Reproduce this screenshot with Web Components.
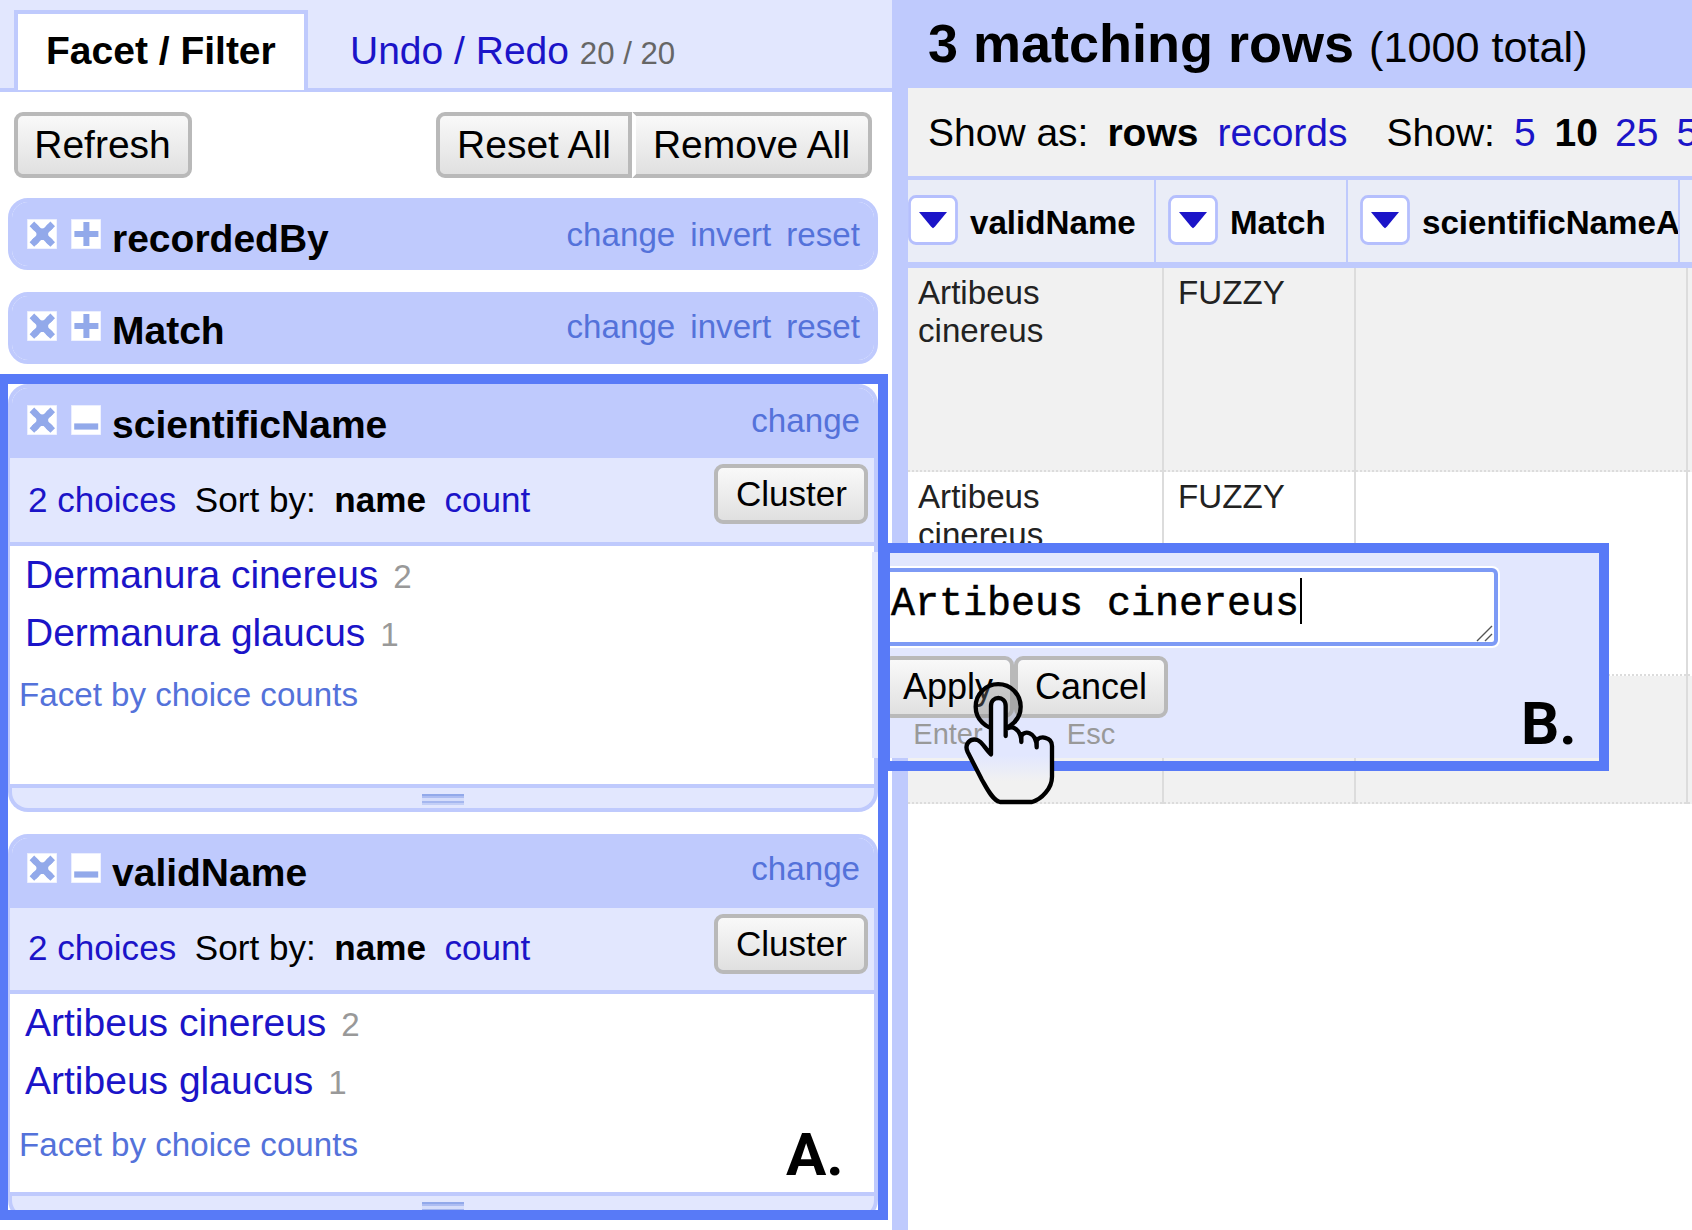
<!DOCTYPE html>
<html lang="en">
<head>
<meta charset="utf-8">
<title>Facets</title>
<style>
html, body { margin: 0; height: 100%; overflow: hidden; background: #fff; }
body {
  --frame: #bfcafd; --tint: #e2e7fe; --link: #1b14c8; --soft: #5472da; --mark: #587af7;
  font-family: "Liberation Sans", Arial, sans-serif; font-size: 39px; color: #000;
}
</style>
</head>
<body>
<refine-app></refine-app>
<script>
const define = (name, html, setup) => customElements.define(name, class extends HTMLElement {
  constructor() {
    super();
    this.attachShadow({ mode: 'open' }).innerHTML = html;
  }
  connectedCallback() { if (setup) setup(this, this.shadowRoot); }
});

define('push-button', `
<style>
:host { display: inline-flex; box-sizing: border-box; align-items: center; justify-content: center; flex: none;
  border: 4px solid #b9b9b9; border-radius: 9px; white-space: nowrap; color: #000;
  background: linear-gradient(#f9f9f9, #e0e0e0) padding-box; }
:host([join="start"]) { border-radius: 9px 0 0 9px; }
:host([join="end"]) { border-radius: 0 9px 9px 0; border-left-color: #fff; }
</style><slot></slot>`);

define('square-icon', `
<style>
:host { display: block; width: 30px; height: 30px; flex: none; }
svg { display: block; }
g { display: none; fill: #92a9ea; }
:host([kind="close"]) .close, :host([kind="plus"]) .plus, :host([kind="minus"]) .minus { display: block; }
</style>
<svg width="30" height="30" viewBox="0 0 30 30">
  <rect width="30" height="30" fill="#fff" opacity=".6"/><rect x=".8" y=".8" width="28.600" height="28.600" fill="#fff"/>
  <g class="close"><path d="M7 7 23.600 23.400M23.600 7 7 23.400" stroke="#92a9ea" stroke-width="6.400"/><path d="M9.400 9.400H21.200V21H9.400Z"/><path d="M7.200 2.600 11.800 7.200 7.200 11.800 2.600 7.200ZM23.400 2.600 28 7.200 23.400 11.800 18.800 7.200ZM7.200 27.800 11.800 23.200 7.200 18.600 2.600 23.200ZM23.400 27.800 28 23.200 23.400 18.600 18.800 23.200Z"/></g>
  <g class="plus"><path d="M12.400 3h6v9h9v6h-9v9h-6v-9h-9v-6h9z"/></g>
  <g class="minus"><path d="M3.200 18.400h24v6.200h-24z"/></g>
</svg>`);

define('tab-bar', `
<style>
:host { display: flex; box-sizing: border-box; height: 92px; padding: 10px 0 0 14px; line-height: 74px;
  background: linear-gradient(var(--tint) 88px, var(--frame) 88px); white-space: nowrap; }
.on { box-sizing: border-box; width: 294px; height: 80px; border: 4px solid var(--frame); border-bottom: 0;
  padding-left: 28px; font-weight: bold; background: #fff; }
.off { padding: 4px 0 0 42px; color: var(--link); }
small { font-size: 31.2px; color: #666; }
</style>
<div class="on">Facet / Filter</div>
<div class="off">Undo / Redo <small>20 / 20</small></div>`);

define('facet-box', `
<style>
:host { display: flex; flex-direction: column; width: 870px; box-sizing: border-box; flex: none; }
header { display: flex; box-sizing: border-box; height: 72px; border: 4px solid var(--frame); border-radius: 20px; }
.bar { display: flex; flex: 1; border-radius: 16px; background: var(--frame); padding: calc(var(--dy, 0px) + 13px) 14px 0 15px; }
.open { display: none; }
:host([open]) header { height: 74px; border-radius: 20px 20px 0 0; }
:host([open]) .bar { border-radius: 16px 16px 0 0; }
:host([open]) .open { display: flex; }
square-icon { margin-top: 4px; }
.bar square-icon + square-icon { margin-left: 14px; }
h3 { margin: 0 0 0 11px; flex: 1; font-size: 39px; line-height: 48px; }
nav { display: flex; gap: 15px; font-size: 33.15px; line-height: 40px; color: var(--soft); }
.tools { box-sizing: border-box; height: var(--tools, 84px); padding: 0 6px 0 18px; margin-left: 2px; border-right: 4px solid var(--frame);
  background: var(--tint); font-size: 35.1px; gap: 18.6px; line-height: var(--toolline, 84px); box-shadow: -2px 0 var(--frame); }
.tools a { color: var(--link); }
.tools push-button { box-sizing: border-box; width: 154px; height: 60px; padding-left: 1px; margin: 6px 0 0 auto; line-height: 50px; }
.list { flex-direction: column; box-sizing: border-box; height: var(--list, 246px); border: solid var(--frame); border-width: 4px 4px 4px 2px; background: #fff; }
.list ::slotted(choice-row) { flex: none; }
.counts { font-size: 33.15px; line-height: 40px; margin: var(--gap, 13px) 0 0 9px; color: var(--soft); }
.grip { box-sizing: border-box; height: 24px; flex: none; border: solid var(--frame); border-width: 0 4px 4px; border-radius: 0 0 20px 20px;
  background: var(--tint); justify-content: center; padding-top: 6px; }
.grip i { width: 42px; height: 11px; background: linear-gradient(#92a9ea 0 2px, #adbdf2 2px 4px, #d5ddfb 4px 7px, #a5b7ef 7px 9.5px, #c3cff7 9.5px 11px); }
</style>
<header><div class="bar"><square-icon kind="close"></square-icon><square-icon class="fold"></square-icon><h3></h3><nav></nav></div></header>
<div class="tools open"><a>2 choices</a><span>Sort by:</span><b>name</b><a>count</a><push-button>Cluster</push-button></div>
<div class="list open"><slot></slot><div class="counts">Facet by choice counts</div></div>
<div class="grip open"><i></i></div>`, (el, root) => {
  root.querySelector('h3').textContent = el.getAttribute('name');
  root.querySelector('.fold').setAttribute('kind', el.hasAttribute('open') ? 'minus' : 'plus');
  root.querySelector('nav').innerHTML = el.getAttribute('actions').split(' ').map(t => `<span>${t}</span>`).join('');
});

define('choice-row', `
<style>
:host { display: flex; align-items: baseline; gap: 15px; padding-left: 15px; height: 58px; line-height: 58px; color: var(--link); }
span { font-size: 33.15px; color: #999; }
</style><slot></slot><span></span>`, (el, root) => {
  root.querySelector('span').textContent = el.getAttribute('count');
});

define('facet-panel', `
<style>
:host { display: flex; flex-direction: column; width: 892px; height: 1230px; flex: none; background: #fff; }
.actions { display: flex; padding: 20px 20px 0 14px; flex: none; }
push-button { height: 66px; padding-right: 1px; }
.space { flex: 1; }
.facets { display: flex; flex-direction: column; gap: 22px; margin: 20px 0 0 8px; height: 1012px; overflow: hidden; }
facet-box:nth-child(even) { --dy: -2px; }
facet-box:nth-child(3) { margin-top: -2px; }
facet-box:nth-child(4) { --tools: 82px; --toolline: 80px; --list: 206px; --gap: 15px; }
</style>
<tab-bar></tab-bar>
<div class="actions">
  <push-button style="width:178px">Refresh</push-button><div class="space"></div>
  <push-button join="start" style="width:196px;padding:0">Reset All</push-button><push-button join="end" style="width:240px">Remove All</push-button>
</div>
<div class="facets">
  <facet-box name="recordedBy" actions="change invert reset"></facet-box>
  <facet-box name="Match" actions="change invert reset"></facet-box>
  <facet-box name="scientificName" actions="change" open>
    <choice-row count="2">Dermanura cinereus</choice-row><choice-row count="1">Dermanura glaucus</choice-row>
  </facet-box>
  <facet-box name="validName" actions="change" open>
    <choice-row count="2">Artibeus cinereus</choice-row><choice-row count="1">Artibeus glaucus</choice-row>
  </facet-box>
</div>`);

define('column-head', `
<style>
:host { display: flex; box-sizing: border-box; height: 82px; flex: none; padding: 15px 0 0 12px; gap: 12px; overflow: hidden; white-space: nowrap;
  border-right: 2px solid var(--frame); background: #eaedf7; font-size: 33.15px; font-weight: bold; line-height: 56px; }
svg { flex: none; }
</style>
<svg width="50" height="50" viewBox="0 0 50 50"><rect x="1.500" y="1.500" width="47" height="47" rx="6.500" fill="#fff" stroke="#b5bffd" stroke-width="2.800"/><path d="M11 17H39L27 31.500 25 33.200 23 31.500Z" fill="#1b14c8"/></svg><slot></slot>`);

define('data-row', `
<style>
:host { display: flex; box-sizing: border-box; height: 204px; flex: none; font-size: 33.15px; line-height: 38px; color: #222;
  background: repeating-linear-gradient(90deg, #dcdcdc 0 2px, transparent 2px 4px) bottom / 100% 2px no-repeat, var(--fill, #fff); }
div { box-sizing: border-box; flex: none; border-right: 2px solid #dcdcdc; padding: 6px 0 0 10px; width: 256px; }
div + div { width: 192px; padding-left: 14px; }
div + div + div { width: 332px; }
</style><div><slot name="valid"></slot></div><div><slot name="match"></slot></div><div></div>`);

define('data-view', `
<style>
:host { display: flex; flex-direction: column; width: 784px; flex: none; overflow: hidden; background: #fff; white-space: nowrap; }
h1 { margin: 0; box-sizing: border-box; height: 88px; padding-left: 20px; font-size: 54px; line-height: 86px; background: var(--frame); }
h1 small { font-size: 43.2px; font-weight: normal; }
.view { display: flex; box-sizing: border-box; height: 92px; flex: none; padding-left: 20px; line-height: 90px; gap: 19px; background: #f1f1f1; border-bottom: 4px solid var(--frame); }
.view a { color: var(--link); }
.heads { display: flex; flex: none; border-bottom: 6px solid var(--frame); }
.heads column-head:first-child { padding-left: 0; }
.cut { white-space: normal; display: block; width: 190px; }
data-row:nth-of-type(odd) { --fill: #f1f1f1; }
data-row:last-of-type { height: 128px; }
</style>
<h1>3 matching rows <small>(1000 total)</small></h1>
<div class="view"><span>Show as:</span><b>rows</b><a>records</a><span style="margin-left:20px">Show:</span><a>5</a><b>10</b><a style="margin-left:-2px">25</a><a style="margin-left:-1px">50</a></div>
<div class="heads">
  <column-head style="width:248px">validName</column-head><column-head style="width:192px">Match</column-head><column-head style="width:332px">scientificNameA</column-head><column-head style="width:192px"></column-head>
</div>
<data-row><span slot="valid" class="cut">Artibeus cinereus</span><span slot="match">FUZZY</span></data-row>
<data-row><span slot="valid" class="cut">Artibeus cinereus</span><span slot="match">FUZZY</span></data-row>
<data-row></data-row>`);

define('edit-popup', `
<style>
:host { display: flex; flex-direction: column; box-sizing: border-box; background: var(--tint); padding: 16px 101px 0 8px; }
.field { display: flex; box-sizing: border-box; height: 78px; flex: none; border: 4px solid #7d9af5; border-radius: 6px; background: #fff;
  box-shadow: 0 0 0 2px #fff; padding: 6px 0 0 7px; font: 40px/54px "Liberation Mono", "Courier New", monospace; -webkit-text-stroke: .5px #000; }
.caret { width: 2px; height: 46px; margin-left: 1px; background: #000; }
.field svg { margin: auto 1px 0 auto; }
.buttons { display: flex; padding: 10px 0 0 2px; font-size: 36px; }
.buttons div { display: flex; flex-direction: column; align-items: center; }
.buttons push-button { height: 62px; line-height: 50px; box-sizing: border-box; padding-bottom: 1px; }
small { font-size: 29px; line-height: 32px; color: #999; }
</style>
<div class="field"><span>Artibeus cinereus</span><i class="caret"></i>
<svg width="17" height="17" viewBox="0 0 17 17" stroke="#555" stroke-width="1.400"><path d="M1 16 16 1M9 16 16 9"/></svg></div>
<div class="buttons"><div><push-button style="width:132px">Apply</push-button><small>Enter</small></div><div><push-button style="width:154px">Cancel</push-button><small>Esc</small></div></div>`);

define('hand-pointer', `
<style>:host { display: block; } svg { display: block; }</style>
<svg width="100" height="125" viewBox="300 480 300 375" fill="none" stroke="#000" stroke-width="13" stroke-linejoin="round">
  <defs><linearGradient id="skin" x1="0" y1="0" x2="0" y2="1"><stop offset=".55" stop-color="#e2e7fe"/><stop offset=".8" stop-color="#f1f1f1"/></linearGradient></defs>
  <circle cx="414.500" cy="560" r="67.500" fill="#888" fill-opacity=".35"/>
  <path fill="url(#skin)" d="M393 703V558C393 526 437 526 437 558V648V628C458 612 484 630 484 666V650C488 630 530 632 530 682V662C538 646 576 650 576 678V770C576 805 545 838 516 846H420C396 840 378 800 365 778L323 696C312 672 330 654 352 660C366 664 378 690 393 703Z"/>
</svg>`);

define('refine-app', `
<style>
:host { display: flex; position: relative; width: 1692px; height: 1230px; overflow: hidden; }
.split { width: 16px; flex: none; background: var(--frame); }
.over { position: absolute; box-sizing: border-box; }
.mark { border: 10px solid var(--mark); }
.tag { font: bold 60px/70px Roboto, sans-serif; }
</style>
<facet-panel></facet-panel><div class="split"></div><data-view></data-view>
<edit-popup class="over" style="left:872px;top:552px;width:727px;height:206px"></edit-popup>
<div class="over mark" style="left:-2px;top:374px;width:890px;height:846px"></div>
<div class="over mark" style="left:880px;top:543px;width:729px;height:228px"></div>
<div class="over tag" style="left:786px;top:1120px">A.</div>
<div class="over tag" style="left:1521px;top:689px">B.</div>
<hand-pointer class="over" style="left:960px;top:680px"></hand-pointer>`);
</script>
</body>
</html>
